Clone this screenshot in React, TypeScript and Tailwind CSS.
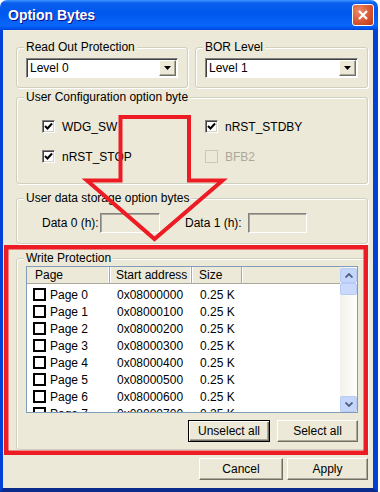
import React from 'react'

const pages = Array.from({ length: 8 }, (_, i) => ({
  name: `Page ${i}`,
  addr: `0x08000${i}00`,
  size: '0.25 K',
}))

const Group = ({ title, className, children }: { title: string, className?: string, children?: React.ReactNode }) => (
  <fieldset className={`border border-[#D0D0BF] rounded-[3px] shadow-[inset_1px_1px_#fff,1px_1px_#fff] min-w-0 pl-[9px] ${className || ''}`}>
    <legend className='ml-[-2px] px-[2px] bg-[#ECE9D8] text-[12px] leading-[14px] text-black'>{title}</legend>
    {children}
  </fieldset>
)

const Combo = ({ value }: { value: string }) => (
  <div className='flex h-[20px] bg-white border border-t-[#828282] border-l-[#828282] border-b-white border-r-white shadow-[inset_1px_1px_#404040]'>
    <span className='flex-1 pl-[3px] pt-[2px] text-[12px] leading-[14px]'>{value}</span>
    <span className='m-[1px] ml-0 w-[17px] flex items-center justify-center bg-[#ECE9D8] border border-t-white border-l-white border-r-[#716F64] border-b-[#716F64] shadow-[inset_-1px_-1px_#ACA899]'>
      <svg width='7' height='4' viewBox='0 0 7 4'><path d='M0 0H7L3.5 4Z' fill='#000' /></svg>
    </span>
  </div>
)

const Check = ({ label, checked, disabled }: { label: string, checked?: boolean, disabled?: boolean }) => (
  <div className='flex items-center h-[17px]'>
    <span className={`w-[13px] h-[13px] flex items-center justify-center border ${disabled ? 'bg-[#ECE9D8] border-[#CAC8BB]' : 'bg-white border-t-[#808080] border-l-[#808080] border-b-white border-r-white shadow-[inset_1px_1px_#404040,inset_-1px_-1px_#D4D0C8]'}`}>
      {checked && (
        <svg width='9' height='9' viewBox='0 0 9 9'><path d='M1 4L3.5 6.5L8 1.5' fill='none' stroke='#000' strokeWidth='2' /></svg>
      )}
    </span>
    <span className={`ml-[7px] text-[12px] leading-[14px] ${disabled ? 'text-[#ACA899]' : 'text-black'}`}>{label}</span>
  </div>
)

const Btn = ({ label, def, className }: { label: string, def?: boolean, className?: string }) => (
  <button className={`h-[22px] text-[12px] leading-[14px] text-black bg-[#ECE9D8] border ${def ? 'border-black shadow-[inset_1px_1px_#fff,inset_-1px_-1px_#716F64,inset_-2px_-2px_#ACA899]' : 'border-t-white border-l-white border-r-[#716F64] border-b-[#716F64] shadow-[inset_-1px_-1px_#ACA899]'} ${className || ''}`}>
    {label}
  </button>
)

const Chevron = ({ up }: { up?: boolean }) => (
  <svg width='8' height='5' viewBox='0 0 8 5'>
    <path d={up ? 'M0.5 4.5L4 1L7.5 4.5' : 'M0.5 0.5L4 4L7.5 0.5'} fill='none' stroke='#4D6185' strokeWidth='1.8' />
  </svg>
)

export default function App() {
  return (
    <div className="w-[380px] h-[492px] bg-white font-['Liberation_Sans',Arial,sans-serif] relative overflow-hidden">
      <div className='w-[378px] h-[492px] flex flex-col'>
        {/* title bar */}
        <div className='h-[30px] flex items-center justify-between pl-[8px] pr-[4px] rounded-t-[7px] bg-[linear-gradient(to_bottom,#3D95FF_0%,#0A5EEE_10%,#0058EE_45%,#0A66FA_85%,#0059F2_92%,#0043D8_100%)]'>
          <span className='text-white font-bold text-[14px] leading-[16px] [text-shadow:1px_1px_#0F1089]'>Option Bytes</span>
          <span className='w-[22px] h-[22px] rounded-[3px] border border-white flex items-center justify-center bg-[radial-gradient(circle_at_30%_30%,#EE8A68,#D4532E_60%,#B8361A)]'>
            <svg width='10' height='10' viewBox='0 0 10 10'><path d='M1 1L9 9M9 1L1 9' stroke='#fff' strokeWidth='2.2' /></svg>
          </span>
        </div>

        {/* body */}
        <div className='flex-1 flex flex-col bg-[#ECE9D8] border-l-[3px] border-r-[5px] border-b-[4px] border-l-[#0041D8] border-r-[#0041D8] border-b-[#0B2B8C] pt-[10px] pl-[13px] pr-[5px] pb-[8px] text-[12px] leading-[14px] text-black'>
          <div className='flex gap-[7px]'>
            <Group title='Read Out Protection' className='w-[172px] pr-[9px] pt-[4px] pb-[9px]'>
              <Combo value='Level 0' />
            </Group>
            <Group title='BOR Level' className='w-[173px] pr-[9px] pt-[4px] pb-[9px]'>
              <Combo value='Level 1' />
            </Group>
          </div>

          <Group title='User Configuration option byte' className='mt-[2px] pt-[14px] pb-[18px]'>
            <div className='grid grid-cols-[163px_1fr] gap-y-[13px] pl-[16px]'>
              <Check label='WDG_SW' checked />
              <Check label='nRST_STDBY' checked />
              <Check label='nRST_STOP' checked />
              <Check label='BFB2' disabled />
            </div>
          </Group>

          <Group title='User data storage option bytes' className='mt-[7px] pt-[8px] pb-[10px]'>
            <div className='flex items-center pl-[16px]'>
              <span className='w-[58px]'>Data 0 (h):</span>
              <span className='w-[60px] h-[20px] border border-t-[#828282] border-l-[#828282] border-b-white border-r-white shadow-[inset_1px_1px_#ACA899]' />
              <span className='ml-[25px] w-[63px]'>Data 1 (h):</span>
              <span className='w-[59px] h-[20px] border border-t-[#828282] border-l-[#828282] border-b-white border-r-white shadow-[inset_1px_1px_#ACA899]' />
            </div>
          </Group>

          <Group title='Write Protection' className='mt-[7px] pr-[9px] pt-[1px] pb-[7px]'>
            <div className='flex h-[147px] border border-[#7F9DB9] bg-white'>
              <div className='flex-1 flex flex-col overflow-hidden'>
                <div className='flex h-[17px] shrink-0 bg-[#ECE9D8] border-b border-[#ACA899]'>
                  <span className='w-[83px] pl-[8px] pt-[1px] border-r border-[#ACA899] shadow-[inset_-1px_0_#fff]'>Page</span>
                  <span className='w-[82px] pl-[6px] pt-[1px] border-r border-[#ACA899] shadow-[inset_-1px_0_#fff,inset_1px_0_#fff]'>Start address</span>
                  <span className='w-[50px] pl-[7px] pt-[1px] border-r border-[#ACA899] shadow-[inset_1px_0_#fff]'>Size</span>
                  <span className='flex-1 shadow-[inset_1px_0_#fff]' />
                </div>
                <div className='flex-1 overflow-hidden pt-[2px]'>
                  {pages.map(p => (
                    <div key={p.name} className='flex items-center h-[17px]'>
                      <span className='w-[83px] pl-[6px] flex items-center'>
                        <span className='w-[13px] h-[13px] border-2 border-black bg-white' />
                        <span className='ml-[4px]'>{p.name}</span>
                      </span>
                      <span className='w-[82px] pl-[7px]'>{p.addr}</span>
                      <span className='w-[50px] pl-[8px]'>{p.size}</span>
                    </div>
                  ))}
                </div>
              </div>
              <div className='w-[17px] flex flex-col bg-[linear-gradient(to_right,#F3F1EC,#FEFEFB)]'>
                <span className='h-[15px] mt-[1px] rounded-[2px] border border-[#B6CBF5] bg-[#C6D5FA] flex items-center justify-center'><Chevron up /></span>
                <span className='h-[12px] rounded-[2px] border border-[#B6CBF5] bg-[#CAD8FB]' />
                <span className='flex-1' />
                <span className='h-[16px] rounded-[2px] border border-[#B6CBF5] bg-[#C6D5FA] flex items-center justify-center'><Chevron /></span>
              </div>
            </div>
            <div className='flex justify-end gap-[7px] mt-[7px]'>
              <Btn label='Unselect all' def className='w-[82px]' />
              <Btn label='Select all' className='w-[81px]' />
            </div>
          </Group>

          <div className='flex justify-end gap-[4px] mt-[8px]'>
            <Btn label='Cancel' className='w-[84px]' />
            <Btn label='Apply' className='w-[81px]' />
          </div>
        </div>
      </div>

      {/* red annotation */}
      <svg className='absolute inset-0 pointer-events-none' width='380' height='492'>
        <rect x='6.25' y='247.25' width='359.5' height='205.5' fill='none' stroke='#ED1C24' strokeWidth='4.5' />
        <path d='M120.5 117H189V180.5H222.5L154.5 239L87 180.5H120.5Z' fill='none' stroke='#ED1C24' strokeWidth='4' />
      </svg>
    </div>
  )
}
